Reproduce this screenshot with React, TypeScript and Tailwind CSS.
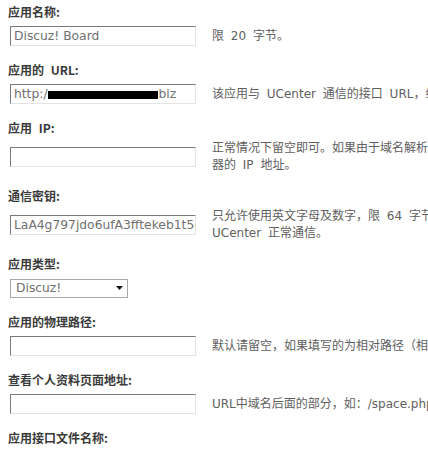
const inputBox =
  "flex h-[20px] w-[186px] shrink-0 items-center overflow-hidden whitespace-nowrap border border-t-[#7a7a7a] border-l-[#7a7a7a] border-b-[#e3e3e3] border-r-[#e3e3e3] bg-white px-[3px] text-[12.3px] text-[#707070] font-['DejaVu_Sans',sans-serif]";

const descText =
  "ml-[16px] whitespace-nowrap text-[12px] leading-[17px] text-[#606060] [word-spacing:3px] font-['DejaVu_Sans','Noto_Sans_CJK_SC',sans-serif]";

const labelText =
  "mb-[4px] h-[16px] text-[12px] font-bold leading-[16px] text-[#3a3a3a] [word-spacing:4px] font-['Noto_Sans_CJK_SC',sans-serif]";

type Field = {
  label: string;
  lines: string[];
  value?: string;
  kind?: "input" | "url" | "select";
};

const fields: Field[] = [
  { label: "应用名称:", value: "Discuz! Board", lines: ["限 20 字节。"] },
  {
    label: "应用的 URL:",
    kind: "url",
    lines: ["该应用与 UCenter 通信的接口 URL，结尾请不要加“/”，应用的通知只发送给主 URL"],
  },
  {
    label: "应用 IP:",
    lines: [
      "正常情况下留空即可。如果由于域名解析问题导致 UCenter 与该应用通信失败，请尝试设置为该应用所在服务",
      "器的 IP 地址。",
    ],
  },
  {
    label: "通信密钥:",
    value: "LaA4g797jdo6ufA3fftekeb1t5c2a9b7e6d8f0",
    lines: [
      "只允许使用英文字母及数字，限 64 字节。应用端的此值必须与此处设置的保持一致，否则该应用将无法与",
      "UCenter 正常通信。",
    ],
  },
  { label: "应用类型:", kind: "select", lines: [] },
  {
    label: "应用的物理路径:",
    lines: ["默认请留空，如果填写的为相对路径（相对于 UC），程序会自动转换为绝对路径，如 ../"],
  },
  {
    label: "查看个人资料页面地址:",
    lines: ["URL中域名后面的部分，如：/space.php?uid=%s"],
  },
];

function Control({ field }: { field: Field }) {
  if (field.kind === "select") {
    return (
      <div className="flex h-[19px] w-[118px] items-center justify-between border border-[#a8a8a8] bg-white pl-[5px] pr-[4px] text-[12.3px] text-[#707070] font-['DejaVu_Sans',sans-serif]">
        <span>Discuz!</span>
        <svg width="7" height="4" viewBox="0 0 7 4">
          <polygon points="0,0 7,0 3.5,4" fill="#111" />
        </svg>
      </div>
    );
  }

  if (field.kind === "url") {
    return (
      <div className={inputBox}>
        <span>http:/</span>
        <span className="inline-block h-[8px] w-[110px] translate-y-[1px] bg-black" />
        <span className="ml-[1px]">biz</span>
      </div>
    );
  }

  return <div className={inputBox}>{field.value ?? ""}</div>;
}

export default function App() {
  return (
    <div className="h-[456px] w-full overflow-hidden bg-white pl-[8px]">
      {fields.map((field, index) => (
        <div key={field.label}>
          <div className={`${index === 0 ? "mt-[4px]" : "mt-[14px]"} ${labelText}`}>
            {field.label}
          </div>
          <div className="flex min-h-[24px] items-center pl-[2px]">
            <Control field={field} />
            {field.lines.length > 0 && (
              <div className={descText}>
                {field.lines.map((line) => (
                  <div key={line}>{line}</div>
                ))}
              </div>
            )}
          </div>
        </div>
      ))}
      <div className={`mt-[14px] ${labelText}`}>应用接口文件名称:</div>
    </div>
  );
}
